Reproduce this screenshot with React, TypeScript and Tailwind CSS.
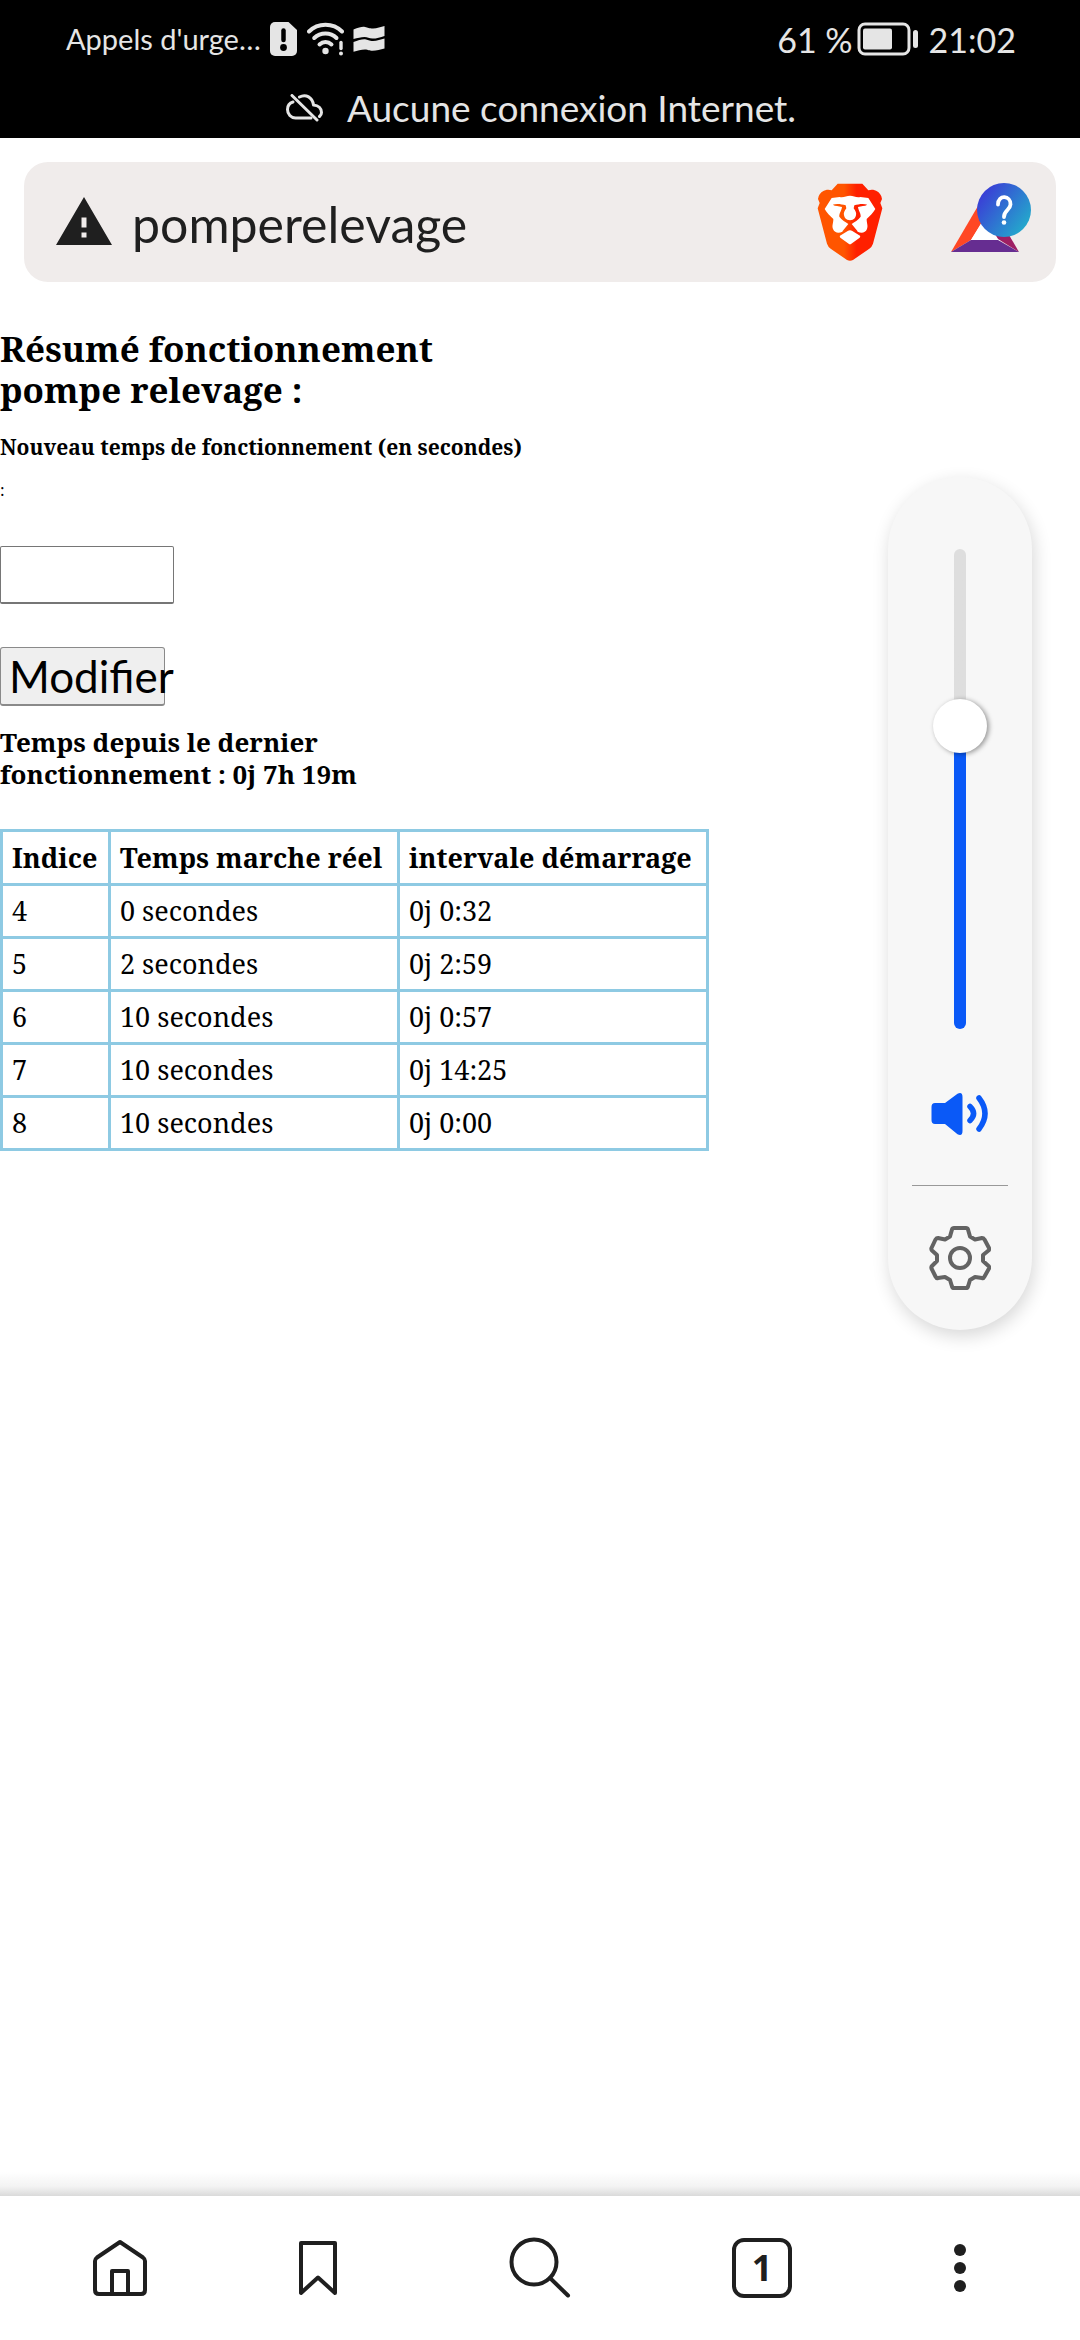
import React from "react";

const rows = [
  { indice: "4", marche: "0 secondes", intervalle: "0j 0:32" },
  { indice: "5", marche: "2 secondes", intervalle: "0j 2:59" },
  { indice: "6", marche: "10 secondes", intervalle: "0j 0:57" },
  { indice: "7", marche: "10 secondes", intervalle: "0j 14:25" },
  { indice: "8", marche: "10 secondes", intervalle: "0j 0:00" },
];

function SimAlertIcon() {
  return (
    <svg width="27" height="34" viewBox="0 0 27 34" aria-hidden="true">
      <path d="M5 0H18.500L27 8V29a5 5 0 0 1-5 5H5a5 5 0 0 1-5-5V5a5 5 0 0 1 5-5z" fill="#e5e5e5" />
      <path d="M13.500 8.500V18" stroke="#000" strokeWidth="4.500" strokeLinecap="round" />
      <circle cx="13.500" cy="25.500" r="3.400" fill="#000" />
    </svg>
  );
}

function WifiAlertIcon() {
  return (
    <svg width="37" height="34" viewBox="0 0 37 34" fill="none" stroke="#e5e5e5" strokeLinecap="round" aria-hidden="true">
      <path d="M2 9.500C11 0.500 26 0.500 35 9.500" strokeWidth="4" />
      <path d="M7.200 16C13.500 10 23.500 10 29.500 16" strokeWidth="4" />
      <path d="M12.500 22.500c3.500-3.300 8.500-3.300 12 0" strokeWidth="4" />
      <circle cx="18.500" cy="29" r="3.200" fill="#e5e5e5" stroke="none" />
      <path d="M34 20.500V26.500" strokeWidth="3.400" />
      <circle cx="34" cy="31.500" r="2" fill="#e5e5e5" stroke="none" />
    </svg>
  );
}

function FlagIcon() {
  return (
    <svg width="32" height="26" viewBox="0 0 32 26" fill="#e5e5e5" aria-hidden="true">
      <path d="M0.500 3.500C6 1.500 9 0.500 12 1c3 .5 4 1.500 8 1.500 4-.2 8-1.500 11.500-2.500V10c-4 1.500-8 2.600-12 2.600-3.500 0-5-1.600-8-1.600-3.500 0-7 1-11 2z" />
      <path d="M0.500 16C5 14.500 9 13 12 13.300c3 .4 4 1.700 8 1.700 4-.2 8-1.500 11.500-2.500V22.500c-4 1-8 2.300-12 2.300-3.500 0-4-1.300-7.500-1.300-4 0-7.500 1.500-11.500 2.300z" />
    </svg>
  );
}

function BatteryIcon() {
  return (
    <svg width="62" height="34" viewBox="0 0 62 34" fill="none" aria-hidden="true">
      <rect x="2" y="2" width="50" height="30" rx="6" stroke="#e5e5e5" strokeWidth="3" />
      <rect x="6" y="6.500" width="29" height="21" rx="2" fill="#e5e5e5" />
      <rect x="56" y="8" width="5" height="18" rx="2.500" fill="#e5e5e5" />
    </svg>
  );
}

function CloudOffIcon() {
  return (
    <svg width="37" height="28" viewBox="0 0 37 28" fill="none" stroke="#e5e5e5" strokeWidth="3" strokeLinecap="round" strokeLinejoin="round" aria-hidden="true">
      <path d="M6 1.500L31 26" />
      <path d="M7 8C3.500 9 1.500 12 1.500 15.500c0 4.800 3.500 8.500 8 8.500H25" />
      <path d="M13.500 3C20 -0.500 26.500 3.500 27.500 11c5 .5 8 3.500 8 7.500 0 1.500-.8 3-2 4" />
    </svg>
  );
}

function WarningIcon() {
  return (
    <svg width="56" height="48" viewBox="0 0 56 48" aria-hidden="true">
      <path fillRule="evenodd" fill="#1f1f1f" d="M28 0L56 48H0zM25.500 20.500v10h5v-10zM25.500 35.500v5h5v-5z" />
    </svg>
  );
}

function LionIcon() {
  return (
    <svg width="66" height="78" viewBox="0 0 198 234" aria-hidden="true">
      <defs>
        <linearGradient id="mane" gradientUnits="userSpaceOnUse" x1="0" x2="198" y1="0" y2="0">
          <stop offset="0" stopColor="#ff5500" />
          <stop offset="0.41" stopColor="#ff5500" />
          <stop offset="0.6" stopColor="#ff2000" />
          <stop offset="1" stopColor="#ff2000" />
        </linearGradient>
      </defs>
      <path
        fill="url(#mane)"
        d="M62 2H136L154 22C170 17 186 24 193 40L195 48L190 60L196 76L168 182Q165 191 157 197L108 231Q99 236 90 231L41 197Q33 191 30 182L2 76L8 60L3 48L5 40C12 24 28 17 44 22Z"
      />
      <path
        fill="#fff"
        d="M44 45L68 42C80 45 88 38 99 38C110 38 118 45 130 42L154 45L175 78C168 90 160 98 149 108C149 122 154 128 150 138C145 150 133 152 122 146L103 130Q99 127 95 130L76 146C65 152 53 150 48 138C44 128 49 122 49 108C38 98 30 90 23 78Z"
      />
      <path fill="url(#mane)" d="M47 65C58 61 74 63 86 67L88 76C83 84 79 89 81 97C83 105 86 108 91 110L99 112L107 110C112 108 115 105 117 97C119 89 115 84 110 76L112 67C124 63 140 61 151 65C143 70 133 68 123 72C124 83 132 91 131 101C124 111 112 117 104 123L123 146L99 134L75 146L94 123C86 117 74 111 67 101C66 91 74 83 75 72C65 68 55 70 47 65Z" />
      <path fill="#fff" d="M69 158L92 144Q99 140 106 144L129 158Q131 161 128 164L103 182Q99 185 95 182L70 164Q67 161 69 158Z" />
    </svg>
  );
}

function RewardsIcon() {
  return (
    <svg width="81" height="70" viewBox="0 0 81 70" aria-hidden="true">
      <defs>
        <linearGradient id="badge" x1="0.1" x2="0.9" y1="0.2" y2="0.8">
          <stop offset="0" stopColor="#3a3fd6" />
          <stop offset="1" stopColor="#24a7cc" />
        </linearGradient>
      </defs>
      <path d="M34 12L62 58H18z" fill="#fff" />
      <path d="M34 11L0 69L20 57L38 28z" fill="#ff4724" />
      <path d="M34 11L68 69L47 56L28 26z" fill="#9e1f63" />
      <path d="M34 34L47 57H20z" fill="#fff" />
      <path d="M0 69L20 57H47L68 69z" fill="#662d91" />
      <circle cx="53" cy="27" r="27" fill="url(#badge)" />
      <path d="M47 21.500C47 11 60 12.500 59.500 21.500C59 27.500 53 27 53 34" fill="none" stroke="#fff" strokeWidth="3.800" strokeLinecap="round" />
      <circle cx="53" cy="39.500" r="2.300" fill="#fff" />
    </svg>
  );
}

function SpeakerIcon() {
  return (
    <svg width="58" height="42" viewBox="0 0 58 42" aria-hidden="true">
      <path d="M4 10H14L26.500 .8Q31.500 -1.500 31.500 4V38Q31.500 43.500 26.500 41.200L14 31H4Q.5 31 .5 27V14Q.5 10 4 10Z" fill="#0a59f7" />
      <path d="M39 13.500Q46 20.500 39 27.500M48 5Q60 20.500 48 36" fill="none" stroke="#0a59f7" strokeWidth="5.500" strokeLinecap="round" />
    </svg>
  );
}

function GearIcon() {
  return (
    <svg width="62" height="66" viewBox="0 0 62 66" fill="none" stroke="#636363" strokeWidth="4" strokeLinejoin="round" aria-hidden="true">
      <path d="M25 3H37Q38.500 3 39 4.500L41 11.500L46 14.500L53 13Q54.500 13 55.500 14.500L60 23Q60.500 24.500 59.500 25.500L54 30V36L59.500 41Q60.500 42 60 43.500L55.500 51.500Q54.500 53.500 53 53L46 52L41 55L39 61.500Q38.500 63 37 63H25Q23.500 63 23 61.500L21 55L16 52L9 53Q7.500 53.500 6.500 51.500L2.500 43.500Q2 42 3 41L8 36V30L3 25.500Q2 24.500 2.500 23L6.500 14.500Q7.500 13 9 13L16 14.500L21 11.500L23 4.500Q23.500 3 25 3Z" />
      <circle cx="31" cy="33" r="10" />
    </svg>
  );
}

const line = {
  fill: "none",
  stroke: "#1f1f1f",
  strokeWidth: 4,
  strokeLinecap: "round" as const,
  strokeLinejoin: "round" as const,
  "aria-hidden": true,
};

function HomeIcon() {
  return (
    <svg width="56" height="58" viewBox="0 0 56 58" {...line}>
      <path d="M28 3L51 18.500Q53 20 53 22V51Q53 55 49 55H7Q3 55 3 51V22Q3 20 5 18.500Z" />
      <path d="M20 54V32H36V54" />
    </svg>
  );
}

function BookmarkIcon() {
  return (
    <svg width="42" height="58" viewBox="0 0 42 58" {...line}>
      <path d="M4 4H38V54L21 38.500L4 54Z" />
    </svg>
  );
}

function SearchIcon() {
  return (
    <svg width="62" height="62" viewBox="0 0 62 62" {...line}>
      <circle cx="25" cy="25" r="22.500" />
      <path d="M41 41L59 58.500" />
    </svg>
  );
}

function MoreIcon() {
  return (
    <svg width="12" height="48" viewBox="0 0 12 48" fill="#1f1f1f" aria-hidden="true">
      <circle cx="6" cy="6" r="6" />
      <circle cx="6" cy="24" r="6" />
      <circle cx="6" cy="42" r="6" />
    </svg>
  );
}

function StatusBar() {
  return (
    <header className="bg-black pr-16 pl-[66px] font-[Lato,sans-serif] text-[#e5e5e5]">
      <div className="flex h-[78px] items-center justify-between">
        <div className="flex items-center">
          <span className="w-[204px] text-[29px]">Appels d'urge…</span>
          <SimAlertIcon />
          <span className="ml-[10px]"><WifiAlertIcon /></span>
          <span className="ml-[9px]"><FlagIcon /></span>
        </div>
        <div className="flex items-center">
          <span className="mr-1 text-[34px]">61 %</span>
          <BatteryIcon />
          <span className="ml-[10px] text-[34px]">21:02</span>
        </div>
      </div>
      <div className="flex h-[60px] items-center justify-center gap-6">
        <CloudOffIcon />
        <span className="text-[37px] leading-[50px]">Aucune connexion Internet.</span>
      </div>
    </header>
  );
}

function AddressBar() {
  return (
    <div className="px-6 pt-6">
      <div className="flex h-[120px] items-center rounded-3xl bg-[#f0eceb] pr-6 pl-8">
        <button aria-label="Site non sécurisé" className="pb-[3px]"><WarningIcon /></button>
        <input
          aria-label="Adresse"
          defaultValue="pomperelevage"
          className="ml-5 min-w-0 flex-1 bg-transparent pt-1 font-[Lato,sans-serif] text-[50px] text-[#1f1f1f] outline-none"
        />
        <button aria-label="Protections"><LionIcon /></button>
        <button aria-label="Récompenses" className="ml-[68px] pb-2"><RewardsIcon /></button>
      </div>
    </div>
  );
}

function PumpPage() {
  return (
    <section className="pt-[46px] font-['Noto_Serif','DejaVu_Serif_Condensed',serif] text-black">
      <h1 className="text-[35px] leading-[41px] font-bold">
        Résumé fonctionnement
        <br />
        pompe relevage :
      </h1>
      <form onSubmit={(e) => e.preventDefault()}>
        <label htmlFor="duree" className="block">
          <span className="mt-[23px] block text-[21px] leading-[28px] font-bold">
            Nouveau temps de fonctionnement (en secondes)
          </span>
          <span className="mt-[15px] block text-base leading-[28px]">:</span>
        </label>
        <input
          id="duree"
          type="text"
          className="mt-[42px] block h-[58px] w-[174px] rounded-[2px] border border-b-2 border-[#767676] bg-white px-2 text-[28px]"
        />
        <button
          type="submit"
          className="mt-[43px] flex h-[59px] w-[165px] items-center rounded-[3px] border border-b-2 border-[#8a8a8a] bg-[#efefef] pl-2 font-[Lato,sans-serif] text-[44px] whitespace-nowrap"
        >
          Modifier
        </button>
      </form>
      <h2 className="mt-[20px] text-[26px] leading-[32px] font-bold">
        Temps depuis le dernier
        <br />
        fonctionnement : 0j 7h 19m
      </h2>
      <table className="mt-[39px] border-collapse text-left text-[27px] leading-[32px]">
        <thead>
          <tr className="h-[54px]">
            <th className="w-[108px] border-[3px] border-[#8ecae3] px-[9px]">Indice</th>
            <th className="w-[289px] border-[3px] border-[#8ecae3] px-[9px]">Temps marche réel</th>
            <th className="w-[309px] border-[3px] border-[#8ecae3] px-[9px]">intervale démarrage</th>
          </tr>
        </thead>
        <tbody>
          {rows.map((r) => (
            <tr key={r.indice} className="h-[53px]">
              <td className="border-[3px] border-[#8ecae3] px-[9px]">{r.indice}</td>
              <td className="border-[3px] border-[#8ecae3] px-[9px]">{r.marche}</td>
              <td className="border-[3px] border-[#8ecae3] px-[9px]">{r.intervalle}</td>
            </tr>
          ))}
        </tbody>
      </table>
    </section>
  );
}

function VolumePanel() {
  return (
    <aside className="absolute top-[477px] right-12 flex w-36 flex-col items-center rounded-full bg-[#f7f7f7] pt-[72px] pb-[39px] shadow-[2px_6px_18px_rgba(0,0,0,0.16)]">
      <input
        type="range"
        aria-label="Volume"
        min={0}
        max={1000}
        defaultValue={648}
        className="h-[480px] w-3 appearance-none rounded-full bg-linear-to-b from-[#dedede] from-37% to-[#0a59f7] to-37% [direction:rtl] [writing-mode:vertical-lr] [&::-webkit-slider-thumb]:size-[54px] [&::-webkit-slider-thumb]:appearance-none [&::-webkit-slider-thumb]:rounded-full [&::-webkit-slider-thumb]:bg-white [&::-webkit-slider-thumb]:shadow-[2px_1px_5px_rgba(0,0,0,0.4)]"
      />
      <button aria-label="Son" className="mt-16"><SpeakerIcon /></button>
      <hr className="mt-[50px] w-24 border-t border-[#999]" />
      <button aria-label="Réglages" className="mt-[39px]"><GearIcon /></button>
    </aside>
  );
}

function BottomBar() {
  return (
    <footer>
      <div className="h-6 bg-linear-to-b from-white via-[#f3f3f3] via-60% to-[#dadada]" />
      <nav className="grid h-36 grid-cols-[15fr_18fr_19fr_18fr_15fr] items-center justify-items-center bg-white px-[30px]">
        <button aria-label="Accueil"><HomeIcon /></button>
        <button aria-label="Favoris"><BookmarkIcon /></button>
        <button aria-label="Rechercher"><SearchIcon /></button>
        <button
          aria-label="Onglets"
          className="flex h-[60px] w-[60px] items-center justify-center rounded-xl border-4 border-[#1f1f1f] font-['Noto_Sans',sans-serif] text-[36px] leading-none font-bold text-[#1f1f1f]"
        >
          1
        </button>
        <button aria-label="Menu"><MoreIcon /></button>
      </nav>
    </footer>
  );
}

export default function App() {
  return (
    <div className="relative flex min-h-screen flex-col bg-white">
      <StatusBar />
      <AddressBar />
      <main className="flex-1">
        <PumpPage />
      </main>
      <VolumePanel />
      <BottomBar />
    </div>
  );
}
